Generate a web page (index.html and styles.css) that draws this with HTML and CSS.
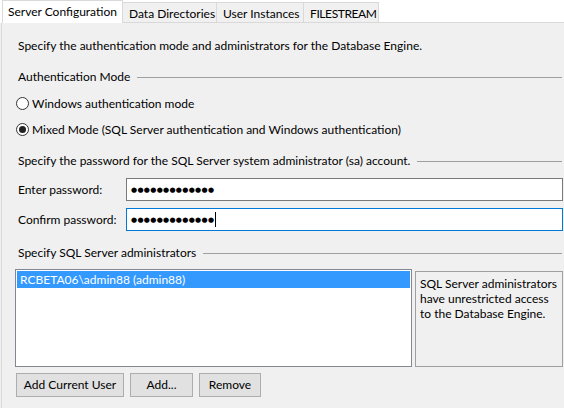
FILE: index.html
```html
<!DOCTYPE html>
<html>
<head>
<meta charset="utf-8">
<link rel="stylesheet" href="styles.css">
</head>
<body>
<div class="window">
  <div class="tabs">
    <div class="tab selected">Server Configuration</div>
    <div class="tab t2">Data Directories</div>
    <div class="tab t3">User Instances</div>
    <div class="tab t4">FILESTREAM</div>
    <div class="tab-rest"></div>
  </div>
  <div class="panel">
    <div class="intro">Specify the authentication mode and administrators for the Database Engine.</div>
    <div class="group g1"><span>Authentication Mode</span><div class="line"></div></div>
    <div class="radio r1"><span class="circle"></span>Windows authentication mode</div>
    <div class="radio r2"><span class="circle checked"></span>Mixed Mode (SQL Server authentication and Windows authentication)</div>
    <div class="group g2"><span>Specify the password for the SQL Server system administrator (sa) account.</span><div class="line"></div></div>
    <div class="field f1"><label>Enter password:</label><div class="input"><span class="dots">●●●●●●●●●●●●●</span></div></div>
    <div class="field f2"><label>Confirm password:</label><div class="input focused"><span class="dots">●●●●●●●●●●●●●</span><span class="caret"></span></div></div>
    <div class="group g3"><span>Specify SQL Server administrators</span><div class="line"></div></div>
    <div class="admins">
      <div class="list"><div class="row sel">RCBETA06\admin88 (admin88)</div></div>
      <div class="info">SQL Server administrators<br>have unrestricted access<br>to the Database Engine.</div>
    </div>
    <div class="buttons">
      <div class="btn b1">Add Current User</div>
      <div class="btn b2">Add...</div>
      <div class="btn b3">Remove</div>
    </div>
  </div>
</div>
</body>
</html>
```
FILE: styles.css
```css
html, body {
  margin: 0;
  padding: 0;
  background: #f0f0f0;
}
body {
  font-family: "Lato", "Noto Sans", sans-serif;
  font-size: 12px;
  color: #000;
  width: 564px;
  height: 408px;
  overflow: hidden;
}
.window {
  width: 564px;
  height: 408px;
  display: flex;
  flex-direction: column;
}
.tabs {
  display: flex;
  height: 23px;
  align-items: flex-end;
  padding-left: 2px;
  background: #fff;
}
.tab {
  box-sizing: border-box;
  height: 21px;
  border: 1px solid #d9d9d9;
  border-left: none;
  background: #f0f0f0;
  padding: 1px 0 0 6px;
  line-height: 19px;
  white-space: nowrap;
  overflow: hidden;
}
.tab.selected {
  height: 23px;
  width: 121px;
  background: #fff;
  border: 1px solid #d9d9d9;
  border-bottom: none;
  padding: 0 0 0 5px;
  line-height: 22px;
}
.t2 { width: 94px; }
.t3 { width: 87px; }
.t4 { width: 75px; padding-left: 6px; letter-spacing: -0.4px; }
.tab-rest {
  flex: 1;
  height: 21px;
  border-bottom: 1px solid #d9d9d9;
  background: #fff;
  box-sizing: border-box;
}
.panel {
  flex: 1;
  border-left: 1px solid #d9d9d9;
  margin-left: 1px;
  padding: 0 0 0 16px;
  display: flex;
  flex-direction: column;
}
.intro {
  margin-top: 14px;
  height: 17px;
  line-height: 17px;
}
.group {
  display: flex;
  align-items: center;
  height: 17px;
  line-height: 17px;
  padding-right: 2px;
}
.group .line {
  flex: 1;
  height: 0;
  border-top: 1px solid #a0a0a0;
  margin-left: 7px;
  margin-top: 1px;
}
.g1 { margin-top: 14px; }
.g2 { margin-top: 14px; }
.g3 { margin-top: 13px; }
.radio {
  display: flex;
  align-items: center;
  height: 17px;
  line-height: 17px;
}
.r1 { margin-top: 10px; margin-left: -2px; }
.r2 { margin-top: 9px; margin-left: -2px; }
.circle {
  box-sizing: border-box;
  width: 13px;
  height: 13px;
  border: 1px solid #333;
  border-radius: 50%;
  background: #fff;
  margin-right: 3px;
  display: flex;
  align-items: center;
  justify-content: center;
}
.circle.checked::after {
  content: "";
  width: 7px;
  height: 7px;
  border-radius: 50%;
  background: #222;
}
.field {
  display: flex;
  align-items: center;
  height: 23px;
}
.f1 { margin-top: 9px; }
.f2 { margin-top: 7px; }
.field label {
  width: 108px;
  flex: none;
}
.input {
  box-sizing: border-box;
  width: 437px;
  height: 23px;
  background: #fff;
  border: 1px solid #7a7a7a;
  display: flex;
  align-items: center;
  padding-left: 4px;
}
.input.focused {
  border-color: #0078d7;
}
.dots {
  font-family: "DejaVu Sans", sans-serif;
  font-size: 7px;
  letter-spacing: 0.3px;
  line-height: 10px;
}
.caret {
  width: 1px;
  height: 15px;
  background: #000;
  margin-left: 1px;
}
.admins {
  display: flex;
  margin-top: 8px;
  margin-left: -3px;
  height: 98px;
}
.list {
  box-sizing: border-box;
  width: 397px;
  height: 98px;
  background: #fff;
  border: 1px solid #828790;
  padding: 1px;
}
.row {
  height: 17px;
  line-height: 17px;
  padding-left: 3px;
}
.row.sel {
  background: #3399ff;
  color: #fff;
}
.info {
  box-sizing: border-box;
  width: 148px;
  height: 96px;
  margin-top: 2px;
  margin-left: 3px;
  border: 1px solid #a0a0a0;
  padding: 4px 0 0 4px;
  line-height: 15px;
  white-space: nowrap;
}
.buttons {
  display: flex;
  gap: 6px;
  margin-top: 6px;
  margin-left: -2px;
}
.btn {
  box-sizing: border-box;
  height: 24px;
  line-height: 22px;
  border: 1px solid #adadad;
  background: #e1e1e1;
  text-align: center;
}
.b1 { width: 108px; }
.b2 { width: 63px; }
.b3 { width: 62px; }
```
